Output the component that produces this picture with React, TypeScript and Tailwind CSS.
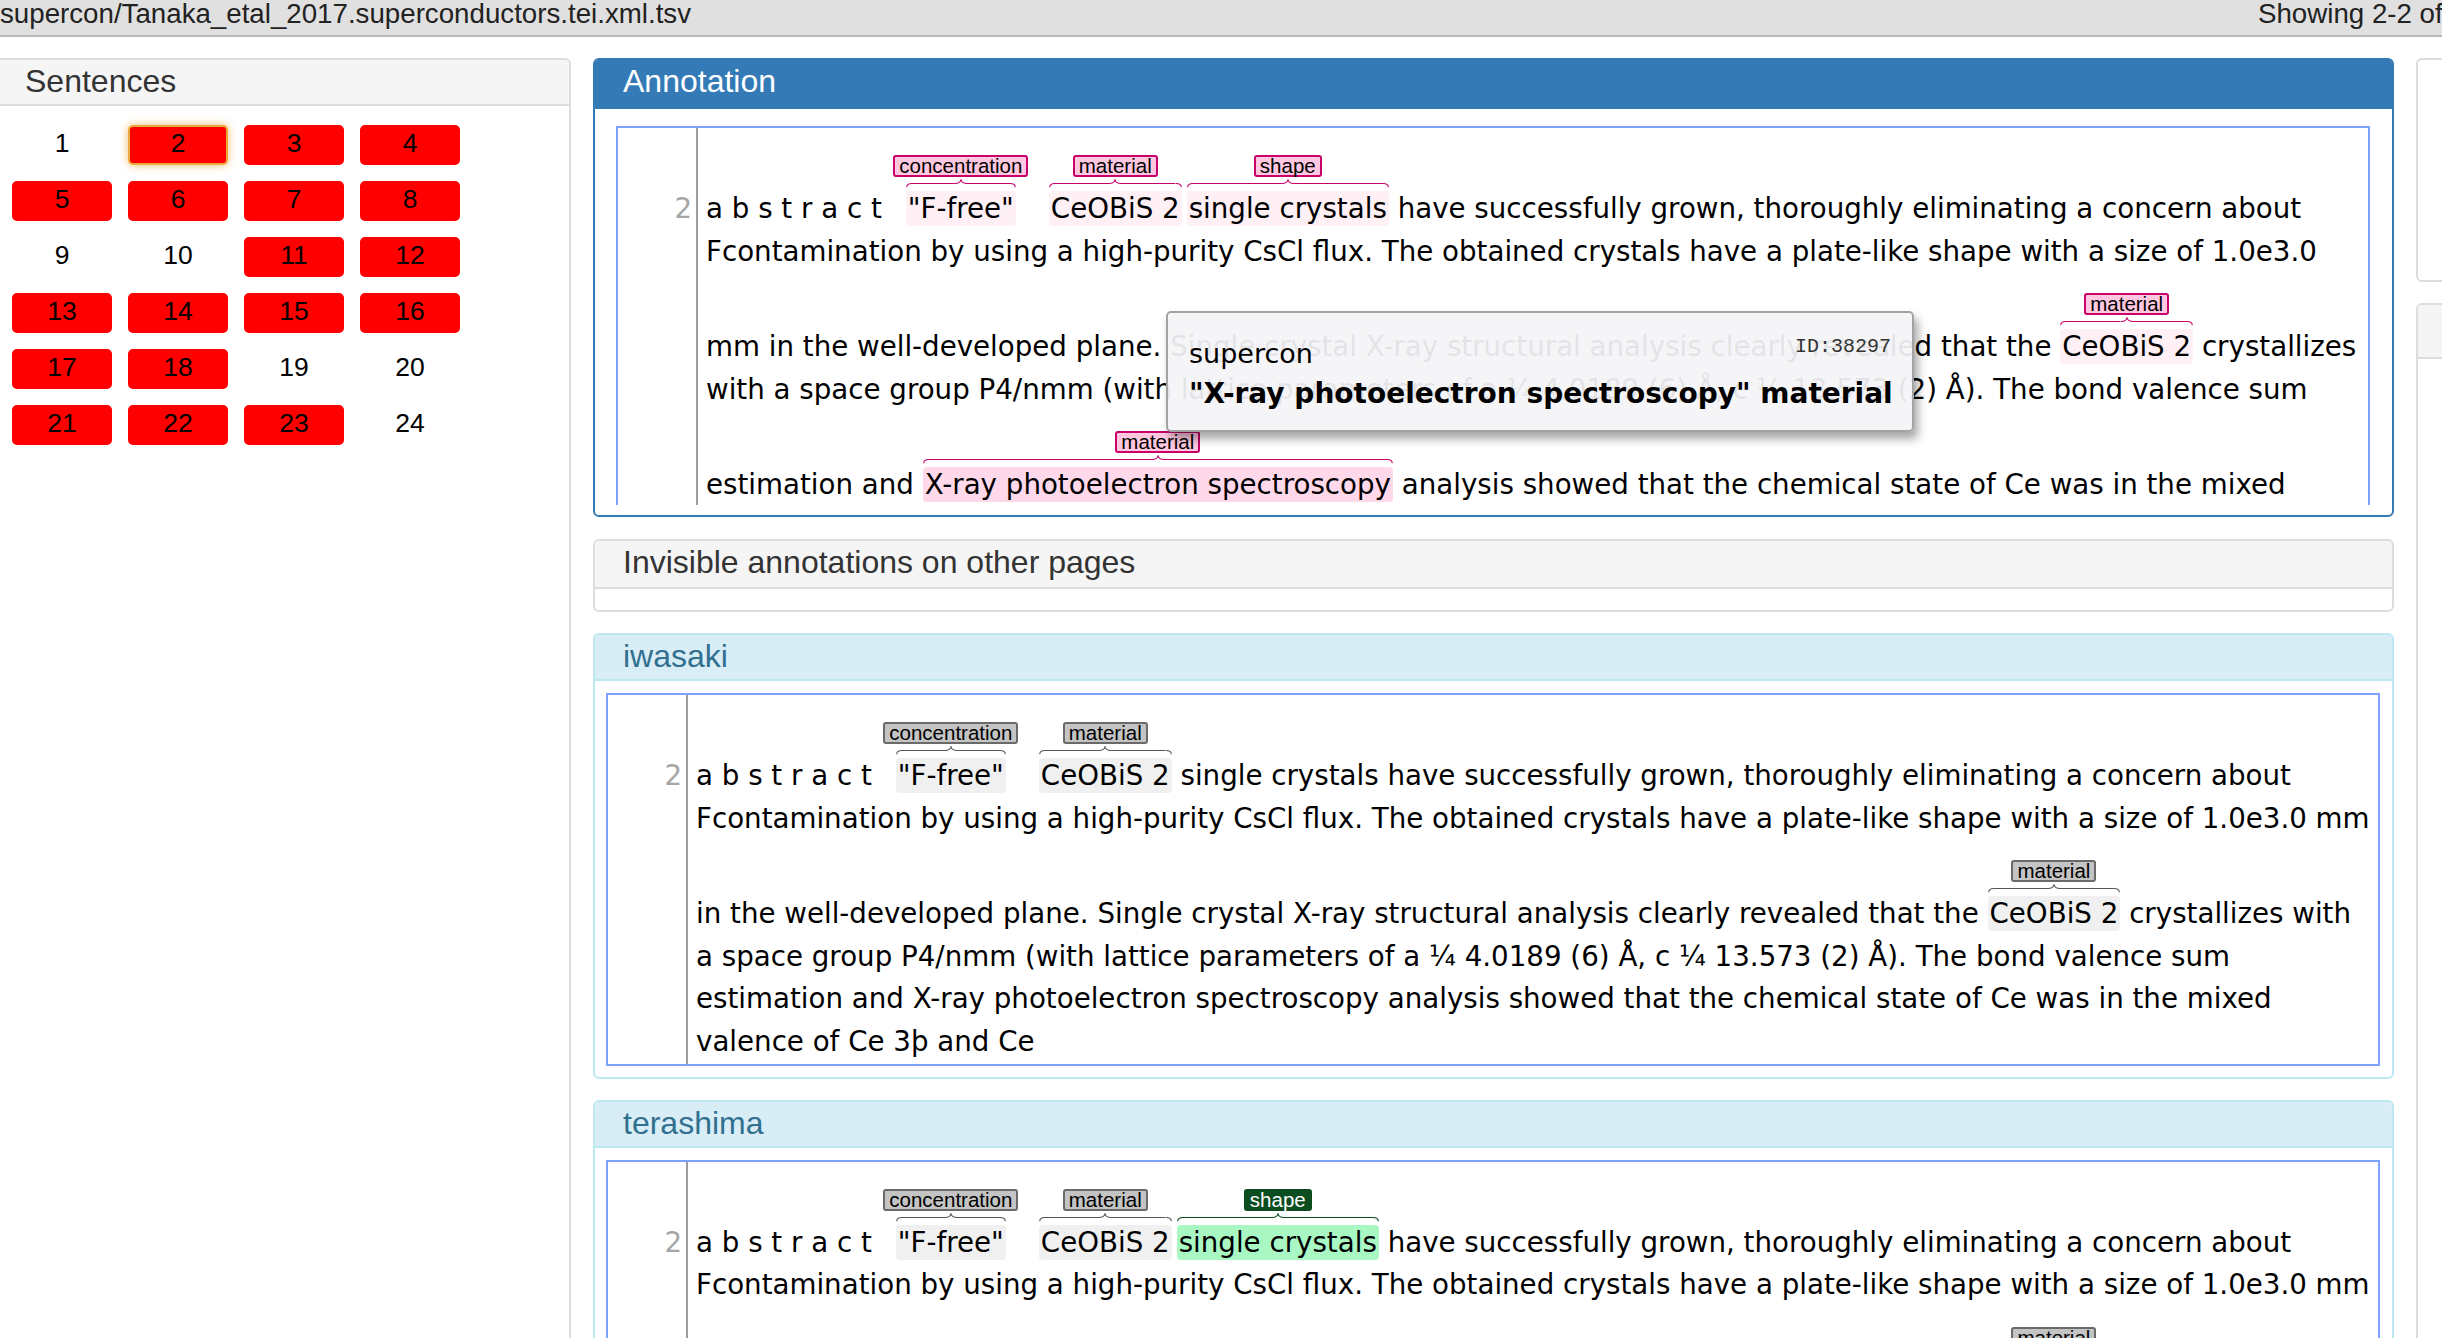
import React from "react";

type Tone = "pink" | "pinkSel" | "grey" | "green";

const tones: Record<Tone, { hl: string; label: string; brace: string }> = {
  pink: { hl: "bg-[#fff0f6]", label: "bg-[#ffc8e0] border-[#c8006a] text-black", brace: "text-[#c8006a]" },
  pinkSel: { hl: "bg-[#ffd8ea]", label: "bg-[#ffc8e0] border-[#c8006a] text-black", brace: "text-[#c8006a]" },
  grey: { hl: "bg-[#f0f0f0]", label: "bg-[#c4c4c4] border-[#6a6a6a] text-black", brace: "text-[#555555]" },
  green: { hl: "bg-[#a9f8c3]", label: "bg-[#0c4d1f] border-[#0c4d1f] text-white", brace: "text-[#0c4d1f]" },
};

// curly bracket drawn between a label and its span
const Brace = ({ cls }: { cls: string }) => (
  <div className={`flex h-[9px] w-full ${cls}`}>
    <svg width="6" height="9" viewBox="0 0 6 9" className="shrink-0">
      <path d="M0.7 8.2 Q0.9 4.5 6 4.5" fill="none" stroke="currentColor" strokeWidth="1.1" />
    </svg>
    <svg className="h-[9px] flex-1" viewBox="0 0 10 9" preserveAspectRatio="none">
      <line x1="0" y1="4.5" x2="10" y2="4.5" stroke="currentColor" strokeWidth="1.1" vectorEffect="non-scaling-stroke" />
    </svg>
    <svg width="12" height="9" viewBox="0 0 12 9" className="shrink-0">
      <path d="M0 4.5 Q5 4.5 6 0.8 Q7 4.5 12 4.5" fill="none" stroke="currentColor" strokeWidth="1.1" />
    </svg>
    <svg className="h-[9px] flex-1" viewBox="0 0 10 9" preserveAspectRatio="none">
      <line x1="0" y1="4.5" x2="10" y2="4.5" stroke="currentColor" strokeWidth="1.1" vectorEffect="non-scaling-stroke" />
    </svg>
    <svg width="6" height="9" viewBox="0 0 6 9" className="shrink-0">
      <path d="M0 4.5 Q5.1 4.5 5.3 8.2" fill="none" stroke="currentColor" strokeWidth="1.1" />
    </svg>
  </div>
);

const Ann = ({ text, label, tone, className = "" }: { text: string; label: string; tone: Tone; className?: string }) => {
  const t = tones[tone];
  return (
    <span className={`relative inline-block rounded-[4px] px-[2px] leading-[35px] ${t.hl} ${className}`}>
      {text}
      <span className="absolute inset-x-0 bottom-full flex flex-col items-center pb-[3px]">
        <span
          className={`whitespace-nowrap rounded-[3px] border-2 px-[4px] font-['Liberation_Sans',Arial,sans-serif] text-[20.5px] leading-[18px] ${t.label}`}
        >
          {label}
        </span>
        <span className="mt-[2px] w-full">
          <Brace cls={t.brace} />
        </span>
      </span>
    </span>
  );
};

const Line = ({ children, labels = false }: { children: React.ReactNode; labels?: boolean }) => (
  <div className={`h-[42.6px] whitespace-pre leading-[42.6px] ${labels ? "mt-[53px]" : ""}`}>{children}</div>
);

const BratBox = ({ children, className = "" }: { children: React.ReactNode; className?: string }) => (
  <div className={`flex border-2 border-[#7fa2ff] bg-white font-['DejaVu_Sans',sans-serif] text-[27.7px] text-black ${className}`}>
    <div className="w-[80px] shrink-0 border-r-2 border-[#9c9c9c] pr-[4px] pt-[7px] text-right text-[#a6a6a6]">
      <div className="mt-[53px] leading-[42.6px]">2</div>
    </div>
    <div className="min-w-0 flex-1 pl-[8px] pt-[7px]">{children}</div>
  </div>
);

const PanelHeading = ({ children, className = "" }: { children: React.ReactNode; className?: string }) => (
  <div className={`pl-[28px] pt-[5px] font-['Liberation_Sans',Arial,sans-serif] text-[32px] leading-[32px] ${className}`}>
    {children}
  </div>
);

const red = new Set([2, 3, 4, 5, 6, 7, 8, 11, 12, 13, 14, 15, 16, 17, 18, 21, 22, 23]);

const App = () => {
  const cells = Array.from({ length: 24 }, (_, i) => i + 1);

  return (
    <div className="relative h-[1338px] w-[2442px] overflow-hidden bg-white">
      {/* file bar */}
      <div className="flex h-[37px] justify-between border-b-2 border-[#b9b9b9] bg-[#e0e0e0] font-['Liberation_Sans',Arial,sans-serif] text-[27.7px] leading-[28px] text-[#222]">
        <div className="whitespace-nowrap">supercon/Tanaka_etal_2017.superconductors.tei.xml.tsv</div>
        <div className="w-[184px] overflow-hidden whitespace-nowrap">Showing 2-2 of 24</div>
      </div>

      <div className="flex gap-[22px] pt-[21px]">
        {/* sentences */}
        <div className="-ml-[5px] h-[1300px] w-[576px] shrink-0 rounded-t-[6px] border-2 border-[#dddddd]">
          <PanelHeading className="h-[46px] rounded-t-[4px] border-b-2 border-[#dddddd] bg-[#f5f5f5] text-[#333]">
            Sentences
          </PanelHeading>
          <div className="grid grid-cols-[repeat(4,100px)] gap-[16px] pl-[15px] pt-[19px] font-['Liberation_Sans',Arial,sans-serif] text-[26.5px] text-black">
            {cells.map((n) => (
              <div
                key={n}
                className={`flex h-[40px] items-center justify-center rounded-[5px] pb-[3px] ${red.has(n) ? "bg-[#ff0000]" : ""} ${
                  n === 2 ? "border-2 border-[#eda73a] shadow-[0_0_8px_rgba(240,173,78,0.8)]" : ""
                }`}
              >
                {n}
              </div>
            ))}
          </div>
        </div>

        {/* annotation column */}
        <div className="flex w-[1801px] shrink-0 flex-col gap-[21px]">
          <div className="relative mb-[1px] rounded-[6px] border-2 border-[#337ab7]">
            <PanelHeading className="h-[49px] rounded-t-[3px] bg-[#337ab7] text-white">Annotation</PanelHeading>
            <div className="pb-[10px] pl-[21px] pr-[22px] pt-[17px]">
              <BratBox className="h-[379px] overflow-hidden border-b-0">
                <Line labels>
                  a b s t r a c t
                  <Ann text={'"F-free"'} label="concentration" tone="pink" className="ml-[24px]" />
                  <Ann text="CeOBiS 2" label="material" tone="pink" className="ml-[33px]" />
                  <Ann text="single crystals" label="shape" tone="pink" className="ml-[5px]" />
                  {" have successfully grown, thoroughly eliminating a concern about"}
                </Line>
                <Line>
                  Fcontamination by using a high-purity CsCl flux. The obtained crystals have a plate-like shape with a size of 1.0e3.0
                </Line>
                <Line labels>
                  {"mm in the well-developed plane. Single crystal X-ray structural analysis clearly revealed that the "}
                  <Ann text="CeOBiS 2" label="material" tone="pink" />
                  {" crystallizes"}
                </Line>
                <Line>with a space group P4/nmm (with lattice parameters of a ¼ 4.0189 (6) Å, c ¼ 13.573 (2) Å). The bond valence sum</Line>
                <Line labels>
                  {"estimation and "}
                  <Ann text="X-ray photoelectron spectroscopy" label="material" tone="pinkSel" />
                  {" analysis showed that the chemical state of Ce was in the mixed"}
                </Line>
                <Line>valence of Ce 3þ and Ce</Line>
              </BratBox>
            </div>

            {/* hover tooltip */}
            <div className="absolute left-[571px] top-[251px] h-[121px] w-[748px] rounded-[5px] border-2 border-[#a3a3a3] bg-[#f4f4f8]/[0.93] px-[21px] pt-[21px] font-['DejaVu_Sans',sans-serif] text-black shadow-[4px_7px_10px_rgba(0,0,0,0.35)]">
              <div className="flex justify-between">
                <span className="text-[27px] leading-[40px]">supercon</span>
                <span className="mt-[3px] font-['Liberation_Mono',monospace] text-[20px] leading-[20px] text-[#333]">ID:38297</span>
              </div>
              <div className="whitespace-nowrap text-[28px] font-bold leading-[40px]">"X-ray photoelectron spectroscopy" material</div>
            </div>
          </div>

          <div className="rounded-[6px] border-2 border-[#dddddd]">
            <PanelHeading className="h-[48px] rounded-t-[4px] border-b-2 border-[#dddddd] bg-[#f5f5f5] text-[#333]">
              Invisible annotations on other pages
            </PanelHeading>
            <div className="h-[21px]" />
          </div>

          <div className="rounded-[6px] border-2 border-[#bce8f1]">
            <PanelHeading className="h-[46px] rounded-t-[4px] border-b-2 border-[#bce8f1] bg-[#d9edf7] text-[#31708f]">
              iwasaki
            </PanelHeading>
            <div className="pb-[11px] pl-[11px] pr-[12px] pt-[12px]">
              <BratBox>
                <Line labels>
                  a b s t r a c t
                  <Ann text={'"F-free"'} label="concentration" tone="grey" className="ml-[24px]" />
                  <Ann text="CeOBiS 2" label="material" tone="grey" className="ml-[33px]" />
                  {" single crystals have successfully grown, thoroughly eliminating a concern about"}
                </Line>
                <Line>
                  Fcontamination by using a high-purity CsCl flux. The obtained crystals have a plate-like shape with a size of 1.0e3.0 mm
                </Line>
                <Line labels>
                  {"in the well-developed plane. Single crystal X-ray structural analysis clearly revealed that the "}
                  <Ann text="CeOBiS 2" label="material" tone="grey" />
                  {" crystallizes with"}
                </Line>
                <Line>a space group P4/nmm (with lattice parameters of a ¼ 4.0189 (6) Å, c ¼ 13.573 (2) Å). The bond valence sum</Line>
                <Line>estimation and X-ray photoelectron spectroscopy analysis showed that the chemical state of Ce was in the mixed</Line>
                <Line>valence of Ce 3þ and Ce</Line>
              </BratBox>
            </div>
          </div>

          <div className="rounded-[6px] border-2 border-[#bce8f1]">
            <PanelHeading className="h-[46px] rounded-t-[4px] border-b-2 border-[#bce8f1] bg-[#d9edf7] text-[#31708f]">
              terashima
            </PanelHeading>
            <div className="pl-[11px] pr-[12px] pt-[12px]">
              <BratBox>
                <Line labels>
                  a b s t r a c t
                  <Ann text={'"F-free"'} label="concentration" tone="grey" className="ml-[24px]" />
                  <Ann text="CeOBiS 2" label="material" tone="grey" className="ml-[33px]" />
                  <Ann text="single crystals" label="shape" tone="green" className="ml-[5px]" />
                  {" have successfully grown, thoroughly eliminating a concern about"}
                </Line>
                <Line>
                  Fcontamination by using a high-purity CsCl flux. The obtained crystals have a plate-like shape with a size of 1.0e3.0 mm
                </Line>
                <Line labels>
                  {"in the well-developed plane. Single crystal X-ray structural analysis clearly revealed that the "}
                  <Ann text="CeOBiS 2" label="material" tone="grey" />
                  {" crystallizes with"}
                </Line>
                <Line>a space group P4/nmm (with lattice parameters of a ¼ 4.0189 (6) Å, c ¼ 13.573 (2) Å). The bond valence sum</Line>
              </BratBox>
            </div>
          </div>
        </div>

        {/* right column, mostly off screen */}
        <div className="flex w-[400px] shrink-0 flex-col gap-[21px]">
          <div className="h-[224px] rounded-[6px] border-2 border-[#dddddd] bg-white" />
          <div className="h-[1100px] rounded-[6px] border-2 border-[#dddddd]">
            <div className="h-[54px] rounded-t-[4px] border-b-2 border-[#dddddd] bg-[#f5f5f5]" />
          </div>
        </div>
      </div>
    </div>
  );
};

export default App;
